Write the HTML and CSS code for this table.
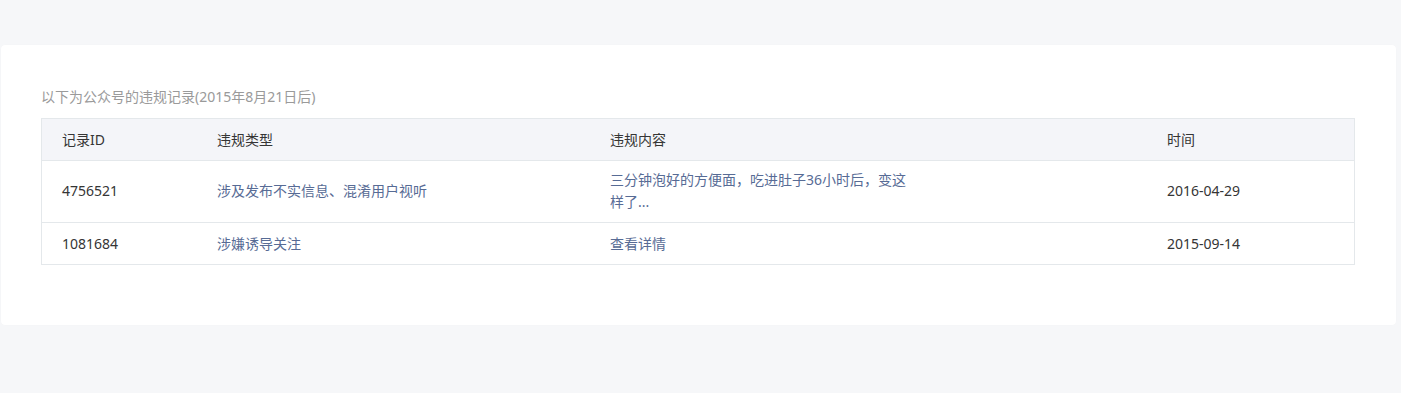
FILE: index.html
```html
<!DOCTYPE html>
<html lang="zh-CN">
<head>
<meta charset="utf-8">
<title>违规记录</title>
<link rel="stylesheet" href="styles.css">
</head>
<body>
<div class="page">
  <div class="card">
    <p class="caption">以下为公众号的违规记录(2015年8月21日后)</p>
    <table class="records">
      <thead>
        <tr>
          <th class="col-id">记录ID</th>
          <th class="col-type">违规类型</th>
          <th class="col-content">违规内容</th>
          <th class="col-time">时间</th>
        </tr>
      </thead>
      <tbody>
        <tr>
          <td>4756521</td>
          <td class="link">涉及发布不实信息、混淆用户视听</td>
          <td class="link"><span class="content">三分钟泡好的方便面，吃进肚子36小时后，变这样了...</span></td>
          <td>2016-04-29</td>
        </tr>
        <tr>
          <td>1081684</td>
          <td class="link">涉嫌诱导关注</td>
          <td class="link">查看详情</td>
          <td>2015-09-14</td>
        </tr>
      </tbody>
    </table>
  </div>
</div>
</body>
</html>
```

FILE: styles.css
```css
html, body {
  margin: 0;
  padding: 0;
  background: #f6f7f9;
  font-family: "Noto Sans", "Noto Sans CJK SC", "Liberation Sans", sans-serif;
  font-size: 14px;
  color: #353535;
}

.page {
  padding: 45px 5px 69px 1px;
}

.card {
  background: #ffffff;
  border-radius: 4px;
  padding: 40px 41px 60px 40px;
  box-shadow: 0 0 1px rgba(0, 0, 0, 0.04);
}

.caption {
  margin: 0 0 9px;
  line-height: 24px;
  color: #9a9a9a;
}

.records {
  width: 100%;
  border-collapse: collapse;
  border: 1px solid #e4e8eb;
  table-layout: fixed;
}

.records th,
.records td {
  text-align: left;
  font-weight: normal;
  line-height: 21px;
  padding: 10px 20px;
  vertical-align: middle;
  border-bottom: 1px solid #e4e8eb;
}

.records tbody tr:first-child td {
  line-height: 22px;
  padding-top: 8px;
  padding-bottom: 9px;
}

.records th {
  background: #f4f5f9;
  color: #353535;
}

.col-id { width: 115px; }
.col-type { width: 353px; }
.col-content { width: 517px; }
.col-time { width: auto; }

.link {
  color: #576b95;
}

.content {
  display: block;
  max-width: 300px;
}
```
